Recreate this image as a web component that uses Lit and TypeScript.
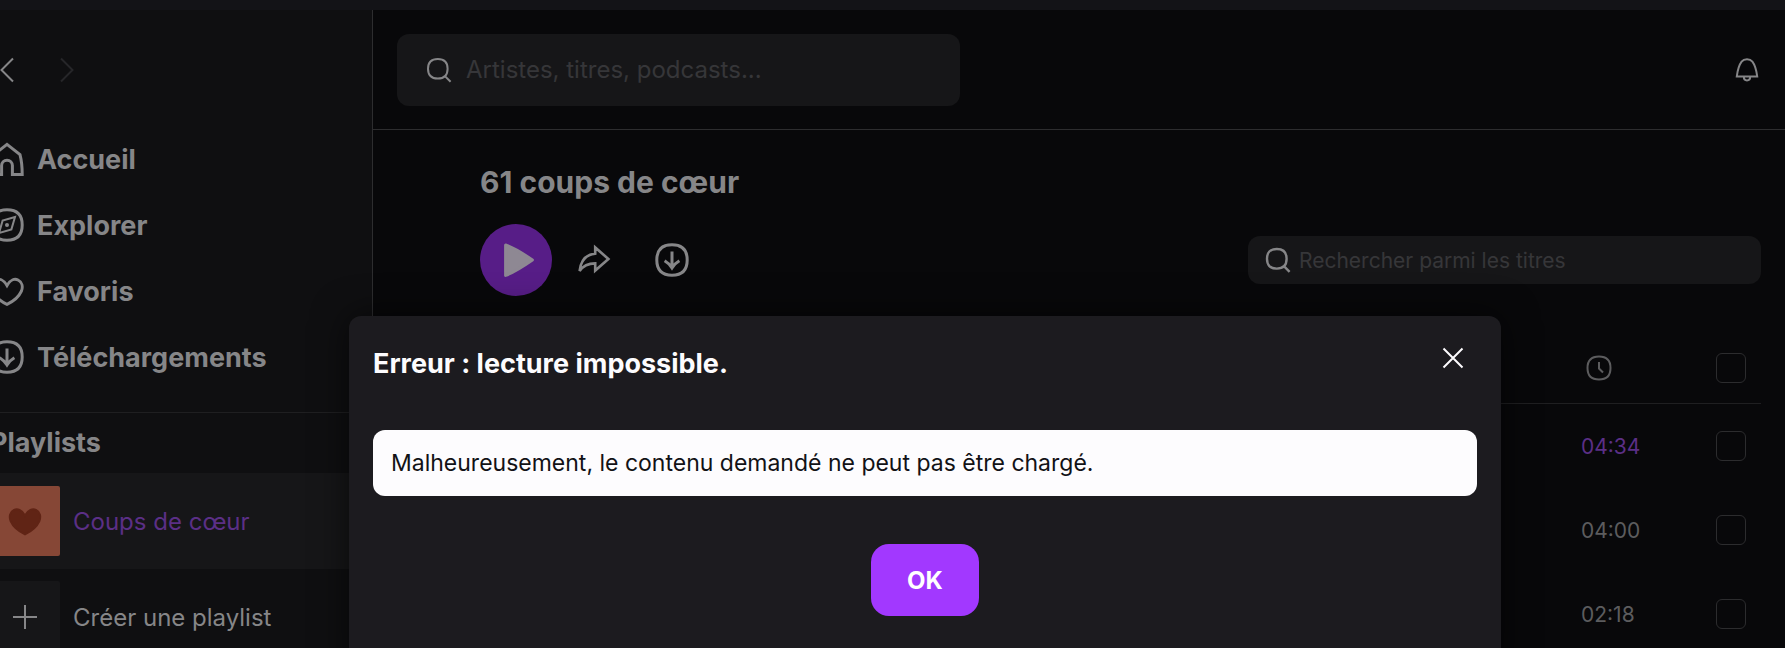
import { LitElement, html, css, svg } from "lit";
import { customElement, state } from "lit/decorators.js";

const squircle = svg`<path d="M17 1.800C27.200 1.800 32.200 6.800 32.200 17S27.200 32.200 17 32.200 1.800 27.200 1.800 17 6.800 1.800 17 1.800Z"/>`;

const glyphs: Record<string, unknown> = {
  home: svg`<path d="M17 2.400 30 12.600Q32.200 21 32.200 32.400H22.400V23.600A5.400 5.400 0 0 0 11.600 23.600V32.400H1.800Q1.800 21 4 12.600Z"/>`,
  explore: svg`${squircle}<path d="M25 9 21.400 21.400 9 25 12.600 12.600Z" stroke-width="2"/><circle cx="17" cy="17" r="2" fill="currentColor" stroke="none"/>`,
  heart: svg`<path d="M17 11.400C13.800 5.800 9.400 4.400 6 6 2 8 .8 12.600 2.600 17.200 5 22.600 11 27.600 17 30.400 23 27.600 29 22.600 31.400 17.200 33.200 12.600 32 8 28 6 24.600 4.400 20.200 5.800 17 11.400Z"/>`,
  download: svg`${squircle}<path d="M17 8.400V24.400M9.600 17.800C12.400 19.400 15 21.800 17 25 19 21.800 21.600 19.400 24.400 17.800"/>`,
  share: svg`<path d="M18.200 10.600V4.400L31.400 16 18.200 27.600V20.400C11 20.400 6.400 22.400 2.600 28 3.800 17.600 9.400 11.400 18.200 10.600Z" stroke-width="2.600"/>`,
};

const icon = (name: string) => html`<svg class="icon" viewBox="0 0 34 34" aria-hidden="true">${glyphs[name]}</svg>`;

const searchIcon = (weight: number) => html`<svg class="search-icon" viewBox="0 0 26 26" stroke-width=${weight} aria-hidden="true">
  <path d="M11.800 2C18.600 2 21.600 5.400 21.600 11.800S18.600 21.600 11.800 21.600 2 18.200 2 11.800 5 2 11.800 2ZM18.400 18.600 24.600 24.800"/>
</svg>`;

@customElement("app-root")
export class AppRoot extends LitElement {
  @state() private open = true;

  private nav = [
    { icon: "home", label: "Accueil" },
    { icon: "explore", label: "Explorer" },
    { icon: "heart", label: "Favoris" },
    { icon: "download", label: "Téléchargements" },
  ];

  private tracks = [
    { time: "04:34", playing: true },
    { time: "04:00", playing: false },
    { time: "02:18", playing: false },
  ];

  static styles = css`
    :host {
      display: block;
      height: 100vh;
      overflow: hidden;
      position: relative;
      background: #08080a;
      color: #868688;
      font-family: Inter, "Liberation Sans", sans-serif;
      font-size: 24px;
    }
    * { box-sizing: border-box; }
    button { font: inherit; color: inherit; background: none; border: 0; padding: 0; cursor: pointer; }
    a { color: inherit; text-decoration: none; }
    svg { fill: none; stroke: currentColor; display: block; flex: none; }
    .titlebar { height: 10px; background: #131317; }
    .shell { display: flex; margin-left: -12px; }
    .sidebar { width: 385px; flex: none; height: 100vh; background: #0f0f11; border-right: 1px solid #2d2d2f; }
    .history { display: flex; gap: 36px; height: 116px; padding: 4px 0 0 8px; align-items: center; }
    .history svg { width: 24px; height: 26px; stroke-width: 2; }
    .history button:disabled { color: #262629; }
    .nav-link { display: flex; align-items: center; gap: 13px; height: 66px; padding-left: 2px; font-size: 27px; font-weight: 700; }
    .icon { width: 34px; height: 34px; stroke-width: 3; }
    .playlists { margin-top: 22px; border-top: 1px solid #1f1f21; }
    h2 { margin: 0; font-size: 27px; line-height: 60px; font-weight: 700; }
    .playlists h2 { padding-left: 2px; }
    .playlist { display: flex; align-items: center; gap: 13px; height: 96px; }
    .playlist.active { background: #161618; color: #5b2f86; }
    .cover { width: 72px; height: 72px; padding-left: 2px; display: grid; place-items: center; border-radius: 2px; background: #161618; }
    .active .cover { background: #864736; color: #602415; height: 70px; }
    .cover svg { width: 34px; height: 34px; stroke-width: 2; }
    .active .cover svg { fill: currentColor; }

    .main { flex: 1; min-width: 0; }
    .header { display: flex; align-items: center; justify-content: space-between; height: 120px; padding: 0 26px 0 24px; border-bottom: 1px solid #2d2d2f; }
    .search { display: flex; align-items: center; background: #161618; border-radius: 12px; }
    .search input { flex: 1; min-width: 0; border: 0; outline: 0; padding: 0; background: none; color: #868688; font: inherit; }
    .search input::placeholder { color: #363639; opacity: 1; }
    .search-icon { width: 26px; height: 26px; }
    .search.global { width: 563px; height: 72px; padding: 0 29px; gap: 14px; }
    .search.tracks { width: 513px; height: 48px; padding: 0 17px; gap: 8px; font-size: 21px; }
    .bell { width: 24px; height: 24px; stroke-width: 2; }

    .content { padding: 34px 24px 0 107px; }
    h1 { margin: 0 0 24px; font-size: 30px; line-height: 36px; font-weight: 700; }
    .toolbar { display: flex; align-items: center; margin-bottom: 36px; }
    .toolbar .search { margin-left: auto; }
    .play { width: 72px; height: 72px; border-radius: 50%; background: #571d87; margin-right: 25px; }
    .play svg { width: 72px; height: 72px; fill: #8e8893; stroke: #8e8893; stroke-width: 3; stroke-linejoin: round; }
    .share { margin-right: 44px; }
    table { width: 100%; border-spacing: 0; font-size: 21px; table-layout: fixed; }
    th, td { padding: 0; text-align: left; vertical-align: middle; height: 84px; }
    th { height: 72px; border-bottom: 1px solid #1f1f21; }
    .time { width: 135px; color: #5c5c5e; }
    .time svg { width: 26px; height: 26px; margin-left: 5px; stroke-width: 2; }
    .playing .time { color: #5b2f86; }
    .pick { width: 45px; }
    input[type="checkbox"] { appearance: none; display: block; width: 30px; height: 30px; margin: 0; border: 1px solid #2c2c2e; border-radius: 6px; }

    .backdrop { position: absolute; inset: 0; display: flex; justify-content: center; align-items: flex-start; padding: 316px 0 0 65px; }
    .dialog { width: 1152px; min-height: 360px; flex: 0 1 auto; padding: 0 24px 60px; border-radius: 12px; background: #1c1b1f; color: #fdfcfe; box-shadow: 0 0 36px rgba(0, 0, 0, 0.6); }
    .dialog-head { display: flex; align-items: center; justify-content: space-between; height: 84px; margin-bottom: 30px; }
    .dialog h2 { line-height: 36px; padding-top: 12px; }
    .close { width: 48px; height: 48px; display: grid; place-items: center; }
    .close svg { width: 22px; height: 22px; stroke-width: 2; }
    .message { margin: 0 0 48px; padding: 15px 18px; font-size: 23px; line-height: 36px; border-radius: 12px; background: #fdfcfe; color: #121216; }
    .ok { display: block; height: 72px; padding: 0 36px; margin: 0 auto; border-radius: 18px; background: #a238ff; color: #fff; font-weight: 700; }
  `;

  private close = () => { this.open = false; };

  render() {
    return html`
      <div class="titlebar"></div>
      <div class="shell">
        <aside class="sidebar">
          <div class="history">
            <button aria-label="Précédent"><svg viewBox="0 0 24 26"><path d="M17 1.500 5.500 13 17 24.500"/></svg></button>
            <button aria-label="Suivant" disabled><svg viewBox="0 0 24 26"><path d="M5 1.500 16.500 13 5 24.500"/></svg></button>
          </div>
          <nav>
            ${this.nav.map((n) => html`<a class="nav-link" href="#">${icon(n.icon)}<span>${n.label}</span></a>`)}
          </nav>
          <section class="playlists">
            <h2>Playlists</h2>
            <a class="playlist active" href="#"><span class="cover">${icon("heart")}</span><span>Coups de cœur</span></a>
            <a class="playlist" href="#"><span class="cover"><svg viewBox="0 0 34 34"><path d="M17 5V29M5 17H29"/></svg></span><span>Créer une playlist</span></a>
          </section>
        </aside>
        <main class="main">
          <header class="header">
            <label class="search global">${searchIcon(2)}<input type="text" aria-label="Rechercher" placeholder="Artistes, titres, podcasts..."></label>
            <button aria-label="Notifications"><svg class="bell" viewBox="0 0 24 24"><path d="M1.800 18.400C2.600 12 4.200 6.800 6.600 3.600 9 .6 15 .6 17.400 3.600 19.800 6.800 21.400 12 22.200 18.400ZM8.800 18.600C8.800 23.800 15.200 23.800 15.200 18.600"/></svg></button>
          </header>
          <div class="content">
            <h1>61 coups de cœur</h1>
            <div class="toolbar">
              <button class="play" aria-label="Lecture"><svg viewBox="0 0 72 72"><path d="M25.600 21Q35 24 52.400 36 35 48 25.600 51.400Z"/></svg></button>
              <button class="share" aria-label="Partager">${icon("share")}</button>
              <button aria-label="Télécharger">${icon("download")}</button>
              <label class="search tracks">${searchIcon(2.4)}<input type="text" aria-label="Rechercher parmi les titres" placeholder="Rechercher parmi les titres"></label>
            </div>
            <table>
              <thead>
                <tr>
                  <th></th>
                  <th class="time" aria-label="Durée"><svg viewBox="0 0 26 26"><path d="M13 1.500C21 1.500 24.500 5 24.500 13S21 24.500 13 24.500 1.500 21 1.500 13 5 1.500 13 1.500ZM13 7V13.500L17 17.500"/></svg></th>
                  <th class="pick"><input type="checkbox" aria-label="Tout sélectionner"></th>
                </tr>
              </thead>
              <tbody>
                ${this.tracks.map((t) => html`<tr class=${t.playing ? "playing" : ""}>
                  <td></td>
                  <td class="time">${t.time}</td>
                  <td class="pick"><input type="checkbox" aria-label="Sélectionner le titre"></td>
                </tr>`)}
              </tbody>
            </table>
          </div>
        </main>
      </div>
      ${this.open ? html`<div class="backdrop">
        <section class="dialog" role="dialog" aria-modal="true" aria-labelledby="error-title">
          <div class="dialog-head">
            <h2 id="error-title">Erreur : lecture impossible.</h2>
            <button class="close" aria-label="Fermer" @click=${this.close}><svg viewBox="0 0 22 22"><path d="M1.500 1.500 20.500 20.500M20.500 1.500 1.500 20.500"/></svg></button>
          </div>
          <p class="message">Malheureusement, le contenu demandé ne peut pas être chargé.</p>
          <button class="ok" @click=${this.close}>OK</button>
        </section>
      </div>` : ""}
    `;
  }
}
